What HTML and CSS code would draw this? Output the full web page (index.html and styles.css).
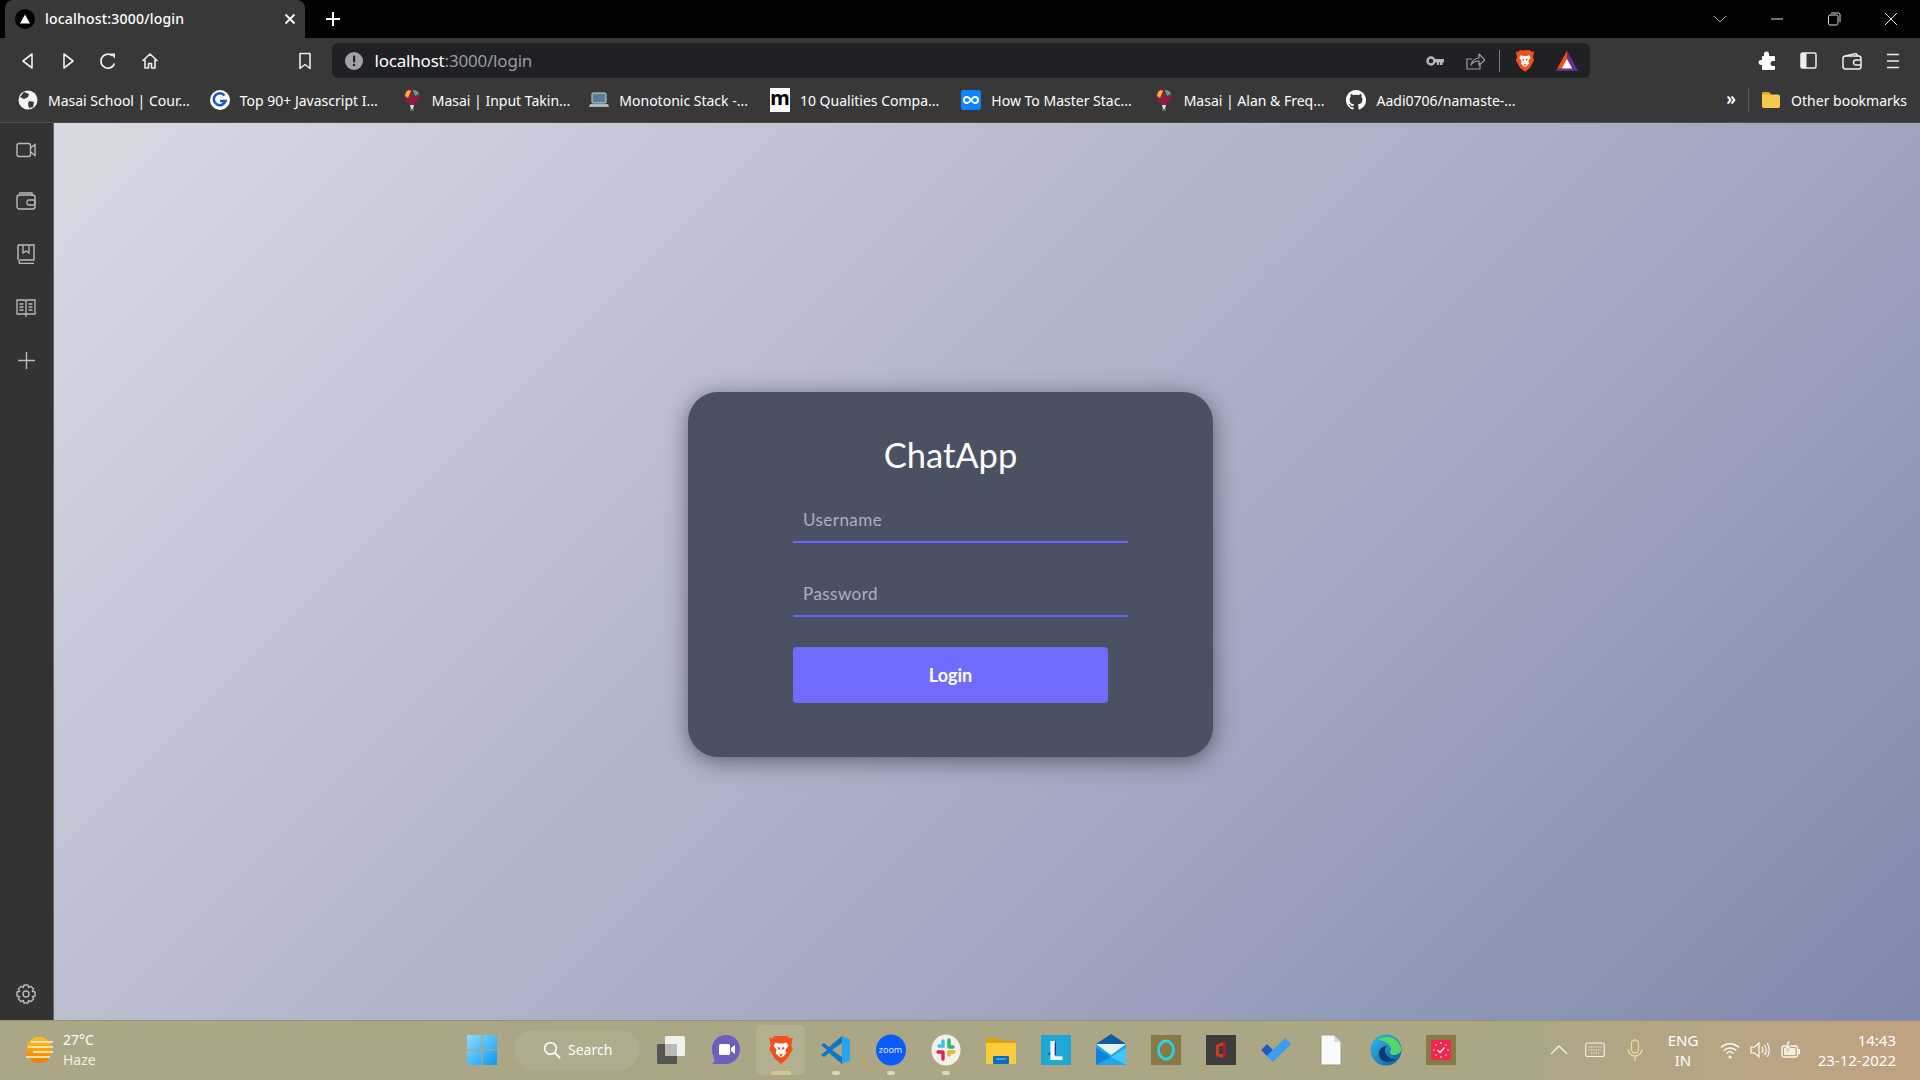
FILE: index.html
```html
<!DOCTYPE html>
<html lang="en">
<head>
  <meta charset="UTF-8" />
  <meta name="viewport" content="width=device-width, initial-scale=1.0"/>
  <title>ChatApp</title>
  <link rel="stylesheet" href="styles.css">
</head>
<body>
  <svg class="defs" width="0" height="0">
    <symbol id="balloon" viewBox="0 0 20 24">
      <path d="M10 1C5 1 2 4 2 8c0 4 4 7 6 9h4c2-2 6-5 6-9 0-4-3-7-8-7z" fill="#8c1d3f"/>
      <path d="M4 4c2-2 4-2 5-1L6 10 3 8z" fill="#e8b931"/>
      <path d="M11 2c3 0 5 1 6 4l-4 2z" fill="#35b0a5"/>
      <path d="M8 17h4l-1 4H9z" fill="#ddd"/>
      <rect x="8" y="21" width="4" height="2" fill="#666"/>
    </symbol>
    <symbol id="lion" viewBox="0 0 24 28">
      <path d="M6 1h12l2 2 3-.5-1.500 7L23 13l-5 9-6 5-6-5-5-9 1.500-3.500L1 2.500 4 3z" fill="#f1511b"/>
      <path d="M7 7l3 1h4l3-1 2 3-3 4 1 3-3 3-2 1-2-1-3-3 1-3-3-4z" fill="#fff"/>
      <path d="M9 11l2 1v2l-2-1zM15 11l-2 1v2l2-1zM10 18h4l-2 2z" fill="#f1511b"/>
    </symbol>
  </svg>

  <header class="tab-strip">
    <div class="tab">
      <span class="tab-favicon">
        <svg width="12" height="12" viewBox="0 0 12 12"><path d="M6 1.500 11 10.500H1z" fill="#fff"/></svg>
      </span>
      <span class="tab-title">localhost:3000/login</span>
      <svg class="tab-close" width="12" height="12" viewBox="0 0 12 12"><path d="M1.500 1.500l9 9M10.500 1.500l-9 9" stroke="#fff" stroke-width="1.800"/></svg>
    </div>
    <svg class="new-tab" width="16" height="16" viewBox="0 0 16 16"><path d="M8 1v14M1 8h14" stroke="#fff" stroke-width="2"/></svg>
    <div class="window-controls">
      <svg width="14" height="14" viewBox="0 0 14 14"><path d="M1 4l6 6 6-6" fill="none" stroke="#aaa"/></svg>
      <svg width="14" height="14" viewBox="0 0 14 14"><path d="M1 7h12" stroke="#ddd"/></svg>
      <svg width="14" height="14" viewBox="0 0 14 14"><rect x="1.500" y="3" width="9.500" height="10" rx="1.500" fill="none" stroke="#ddd"/><path d="M4 1h7.500A1.500 1.500 0 0 1 13 2.500V10" fill="none" stroke="#ddd"/></svg>
      <svg width="14" height="14" viewBox="0 0 14 14"><path d="M1 1l12 12M13 1L1 13" stroke="#ddd"/></svg>
    </div>
  </header>

  <nav class="toolbar">
    <div class="nav-buttons">
      <svg width="16" height="18" viewBox="0 0 16 18"><path d="M12 2v14L3 9z" fill="none" stroke="#eee" stroke-width="1.600" stroke-linejoin="round"/></svg>
      <svg width="16" height="18" viewBox="0 0 16 18"><path d="M4 2v14l9-7z" fill="none" stroke="#eee" stroke-width="1.600" stroke-linejoin="round"/></svg>
      <svg width="18" height="18" viewBox="0 0 18 18"><path d="M15.500 11.500A7 7 0 1 1 13 3.500" fill="none" stroke="#eee" stroke-width="1.800"/><path d="M11 1.500h5v5z" fill="#eee"/></svg>
      <svg width="18" height="18" viewBox="0 0 18 18"><path d="M1.500 9 9 2l7.500 7M4 7.500V16h3.500v-4.500h3V16H14V7.500" fill="none" stroke="#eee" stroke-width="1.600" stroke-linejoin="round"/></svg>
    </div>
    <svg class="bookmark-star" width="14" height="18" viewBox="0 0 14 18"><path d="M2 1.500h10v15L7 12.500l-5 4z" fill="none" stroke="#eee" stroke-width="1.600" stroke-linejoin="round"/></svg>
    <div class="omnibox">
      <svg width="18" height="18" viewBox="0 0 18 18"><circle cx="9" cy="9" r="9" fill="#a0a2a6"/><rect x="8" y="3.500" width="2.200" height="7" rx="1" fill="#202124"/><circle cx="9.100" cy="13" r="1.300" fill="#202124"/></svg>
      <span class="url"><span class="url-host">localhost</span>:3000/login</span>
      <div class="omnibox-actions">
        <svg class="act-key" width="18" height="10" viewBox="0 0 18 10"><circle cx="5" cy="5" r="3.500" fill="none" stroke="#b4b6b9" stroke-width="2.500"/><path d="M8 3h10v3.500h-1.500V9H14V6.500h-1V9h-2V6.500H8z" fill="#b4b6b9"/></svg>
        <svg class="act-share" width="20" height="20" viewBox="0 0 20 20"><path d="M15 12v6H2V8h5" fill="none" stroke="#9b9da0" stroke-width="1.200"/><path d="M6 14c1-5 5-7 8-7V3l6 6-6 5v-4c-3 0-6 1-8 4z" fill="none" stroke="#9b9da0" stroke-width="1.200" stroke-linejoin="round"/></svg>
        <span class="act-divider"></span>
        <svg class="act-brave" width="20" height="24"><use href="#lion"/></svg>
        <svg class="act-bat" width="22" height="22" viewBox="0 0 22 22"><path d="M11 1 22 21H0z" fill="#9e1f63"/><path d="M11 1 22 21H16L11 11z" fill="#662d91"/><path d="M11 1 0 21H6L11 11z" fill="#ff5000"/><path d="M11 9l5.500 10h-11z" fill="#fff"/><path d="M0 21h22l-1.500-2.500h-19z" fill="#662d91"/></svg>
      </div>
    </div>
    <div class="browser-actions">
      <svg width="18" height="20" viewBox="0 0 18 20"><path d="M6 3a2.500 2.500 0 0 1 5 0v2h5a1 1 0 0 1 1 1v4h-2a2.500 2.500 0 0 0 0 5h2v3a1 1 0 0 1-1 1H5a1 1 0 0 1-1-1v-4H3a2.500 2.500 0 0 1 0-5h1V6a1 1 0 0 1 1-1h1z" fill="#fff"/></svg>
      <svg width="17" height="17" viewBox="0 0 17 17"><rect x="1" y="1" width="15" height="15" rx="1.500" fill="none" stroke="#eee" stroke-width="1.500"/><rect x="1" y="1" width="5.500" height="15" fill="#eee"/></svg>
      <svg width="20" height="18" viewBox="0 0 20 18"><path d="M3 4 14 1.500 16 4" fill="none" stroke="#eee" stroke-width="1.400"/><rect x="1" y="4" width="18" height="13" rx="2.500" fill="none" stroke="#eee" stroke-width="1.500"/><path d="M19 8h-5a2.500 2.500 0 0 0 0 5h5" fill="none" stroke="#eee" stroke-width="1.500"/></svg>
      <svg width="14" height="18" viewBox="0 0 14 18"><path d="M1 2.500h12M1 9h12M1 15.500h12" stroke="#eee" stroke-width="1.600"/></svg>
    </div>
  </nav>

  <div class="bookmarks">
    <a class="bookmark">
      <svg width="20" height="20" viewBox="0 0 20 20"><circle cx="10" cy="10" r="9.500" fill="#f2f2f2"/><path d="M6 2l5 2-1 3-4 2-4-2zM11 11l5 1-1 5-4 1-1-4z" fill="#383838"/></svg>
      <span>Masai School | Cour...</span>
    </a>
    <a class="bookmark">
      <svg width="20" height="20" viewBox="0 0 20 20"><circle cx="10" cy="10" r="10" fill="#fff"/><path d="M14.500 5.500A6 6 0 1 0 15.500 11H10" fill="none" stroke="#1a56c4" stroke-width="2.600"/></svg>
      <span>Top 90+ Javascript I...</span>
    </a>
    <a class="bookmark">
      <svg width="20" height="24"><use href="#balloon"/></svg>
      <span>Masai | Input Takin...</span>
    </a>
    <a class="bookmark">
      <svg width="20" height="18" viewBox="0 0 20 18"><rect x="3" y="2" width="14" height="10" rx="1" fill="#5b7a95" stroke="#cfd6dc"/><path d="M1 13h18l1 3H0z" fill="#aeb8c0"/></svg>
      <span>Monotonic Stack -...</span>
    </a>
    <a class="bookmark">
      <span class="favicon-m">m</span>
      <span>10 Qualities Compa...</span>
    </a>
    <a class="bookmark">
      <svg width="20" height="20" viewBox="0 0 20 20"><rect width="20" height="20" rx="3" fill="#0a84ff"/><path d="M10 10c-1.500-2-2.500-3-4-3a3 3 0 0 0 0 6c1.500 0 2.500-1 4-3s2.500-3 4-3a3 3 0 0 1 0 6c-1.500 0-2.500-1-4-3z" fill="none" stroke="#fff" stroke-width="2"/></svg>
      <span>How To Master Stac...</span>
    </a>
    <a class="bookmark">
      <svg width="20" height="24"><use href="#balloon"/></svg>
      <span>Masai | Alan &amp; Freq...</span>
    </a>
    <a class="bookmark">
      <svg width="20" height="20" viewBox="0 0 16 16"><path fill="#fff" d="M8 0C3.580 0 0 3.580 0 8c0 3.540 2.290 6.530 5.470 7.590.4.070.55-.17.55-.38 0-.19-.01-.82-.01-1.490-2.010.37-2.530-.49-2.690-.94-.09-.23-.48-.94-.82-1.130-.28-.15-.68-.52-.01-.53.630-.01 1.080.58 1.230.82.720 1.210 1.870.87 2.330.66.070-.52.280-.87.510-1.070-1.780-.2-3.640-.89-3.640-3.950 0-.87.310-1.590.820-2.150-.08-.2-.36-1.020.08-2.120 0 0 .67-.21 2.200.82.640-.18 1.320-.27 2-.27s1.360.09 2 .27c1.530-1.040 2.200-.82 2.200-.82.440 1.100.16 1.920.08 2.120.51.560.82 1.270.82 2.150 0 3.070-1.870 3.750-3.650 3.950.29.250.54.730.54 1.480 0 1.070-.01 1.930-.01 2.200 0 .21.150.46.550.38A8.010 8.010 0 0 0 16 8c0-4.420-3.580-8-8-8z"/></svg>
      <span>Aadi0706/namaste-...</span>
    </a>
    <div class="bookmarks-end">
      <span class="more">»</span>
      <span class="bm-divider"></span>
      <svg width="20" height="18" viewBox="0 0 20 18"><path d="M1 3a2 2 0 0 1 2-2h5l2 2.500h7a2 2 0 0 1 2 2V15a2 2 0 0 1-2 2H3a2 2 0 0 1-2-2z" fill="#f6c94e"/><path d="M1 3a2 2 0 0 1 2-2h5l2 2.500H1z" fill="#d9a424"/></svg>
      <span>Other bookmarks</span>
    </div>
  </div>

  <div class="browser-body">
    <aside class="sidebar">
      <svg width="20" height="16" viewBox="0 0 20 16"><rect x="1" y="1.500" width="13.500" height="13" rx="2" fill="none" stroke="#b9bbbe" stroke-width="1.400"/><path d="M14.500 6 19 2.500v11L14.500 10" fill="none" stroke="#b9bbbe" stroke-width="1.400"/></svg>
      <svg width="20" height="18" viewBox="0 0 20 18"><path d="M3 1h13v3" fill="none" stroke="#b9bbbe" stroke-width="1.300"/><rect x="1" y="3" width="18" height="14" rx="2.500" fill="none" stroke="#b9bbbe" stroke-width="1.400"/><rect x="11" y="8" width="8" height="5" rx="1.500" fill="none" stroke="#b9bbbe" stroke-width="1.300"/></svg>
      <svg width="18" height="20" viewBox="0 0 18 20"><path d="M1 16V2a1 1 0 0 1 1-1h15v15H3a2 2 0 0 0 0 3.500h14" fill="none" stroke="#b9bbbe" stroke-width="1.400"/><path d="M6 1v8l3-2 3 2V1" fill="none" stroke="#b9bbbe" stroke-width="1.300"/></svg>
      <svg width="20" height="20" viewBox="0 0 20 20"><path d="M1 2h8l1 1 1-1h8v14h-8l-1 1-1-1H1zM10 3v16" fill="none" stroke="#b9bbbe" stroke-width="1.300"/><path d="M3.500 6h4M3.500 9h4M3.500 12h4M12.500 6h4M12.500 9h4M12.500 12h4" stroke="#b9bbbe" stroke-width="1.300"/></svg>
      <svg width="17" height="17" viewBox="0 0 17 17"><path d="M8.500 0v17M0 8.500h17" stroke="#b9bbbe" stroke-width="1.400"/></svg>
      <svg class="sidebar-gear" width="20" height="20" viewBox="0 0 20 20"><circle cx="10" cy="10" r="3" fill="none" stroke="#b9bbbe" stroke-width="1.400"/><path d="M8 1h4l.6 2.500 2.200-1.200 2.800 2.800-1.300 2.200L19 8v4l-2.700.7 1.300 2.200-2.800 2.800-2.200-1.300L12 19H8l-.6-2.600-2.200 1.300-2.800-2.800 1.300-2.200L1 12V8l2.700-.7-1.300-2.200 2.800-2.800 2.200 1.200z" fill="none" stroke="#b9bbbe" stroke-width="1.400" stroke-linejoin="round"/></svg>
    </aside>

    <main class="page">
      <form class="login-card">
        <h1 class="login-title">ChatApp</h1>
        <input class="login-input" type="text" placeholder="Username">
        <input class="login-input" type="password" placeholder="Password">
        <button class="login-button" type="button">Login</button>
      </form>
    </main>
  </div>

  <footer class="taskbar">
    <div class="weather">
      <svg width="30" height="30" viewBox="0 0 30 30"><defs><linearGradient id="sun" x1="0" y1="0" x2="0" y2="1"><stop offset="0" stop-color="#ffc21a"/><stop offset="1" stop-color="#ef7d00"/></linearGradient></defs><circle cx="15" cy="15" r="13" fill="url(#sun)"/><path d="M7 7h22M4 12h25M9 17h20M2 22h24" stroke="#f0e6c4" stroke-width="2.200" opacity=".9"/></svg>
      <div class="weather-text"><span>27°C</span><span>Haze</span></div>
    </div>

    <div class="task-center">
      <svg class="start-logo" width="30" height="30" viewBox="0 0 30 30"><defs><linearGradient id="win" x1="0" y1="0" x2="1" y2="1"><stop offset="0" stop-color="#8bdcff"/><stop offset="1" stop-color="#0a9bf5"/></linearGradient></defs><path d="M0 0h14.300v14.300H0zM15.700 0H30v14.300H15.700zM0 15.700h14.300V30H0zM15.700 15.700H30V30H15.700z" fill="url(#win)"/></svg>
      <div class="task-search">
        <svg width="18" height="18" viewBox="0 0 18 18"><circle cx="7.500" cy="7.500" r="5.800" fill="none" stroke="#fff" stroke-width="1.600"/><path d="M11.800 11.800 17 17" stroke="#fff" stroke-width="1.800"/></svg>
        <span>Search</span>
      </div>
      <div class="task-icons">
        <span class="task-icon">
          <svg width="30" height="30" viewBox="0 0 30 30"><rect x="9" y="1" width="20" height="20" rx="1.500" fill="#f0f0ee"/><rect x="1" y="9" width="20" height="20" rx="1.500" fill="#505050" opacity=".95"/><rect x="9" y="9" width="12" height="12" fill="#b9b9b5"/></svg>
        </span>
        <span class="task-icon">
          <svg width="30" height="32" viewBox="0 0 30 32"><path d="M15 1c8 0 14 6 14 14s-6 15-14 15H1c2-1 3-3 2-6-1-2-2-5-2-9C1 7 7 1 15 1z" fill="#6c5fc1"/><rect x="8" y="10" width="11" height="11" rx="1.500" fill="#fff"/><path d="M20 14l4-3v9l-4-3z" fill="#fff"/></svg>
        </span>
        <span class="task-icon is-active">
          <svg width="26" height="30"><use href="#lion"/></svg>
          <i class="task-dot dot-active"></i>
        </span>
        <span class="task-icon">
          <svg width="30" height="30" viewBox="0 0 30 30"><path d="M21 1l8 3.500v21L21 29z" fill="#2aa4ec"/><path d="M21 1v7l-10 7 10 7v7L8 18l-5 4-3-2 6-5-6-5 3-2 5 4z" fill="#0a78c2"/></svg>
          <i class="task-dot"></i>
        </span>
        <span class="task-icon">
          <svg width="30" height="32" viewBox="0 0 30 32"><ellipse cx="15" cy="16" rx="15" ry="15.500" fill="#0b5cff"/></svg>
          <span class="zoom-label">zoom</span>
          <i class="task-dot"></i>
        </span>
        <span class="task-icon">
          <svg width="30" height="32" viewBox="0 0 30 32"><ellipse cx="15" cy="16" rx="14.500" ry="15.500" fill="#f2f1ea"/><path d="M12 7v5H8" fill="none" stroke="#36c5f0" stroke-width="3.400" stroke-linecap="round"/><path d="M18 6v6" stroke="#2eb67d" stroke-width="3.400" stroke-linecap="round"/><path d="M22 13h-4" stroke="#2eb67d" stroke-width="3.400" stroke-linecap="round"/><path d="M18 21v-3h5" fill="none" stroke="#ecb22e" stroke-width="3.400" stroke-linecap="round"/><path d="M12 18v7M7 18h5" fill="none" stroke="#e01e5a" stroke-width="3.400" stroke-linecap="round"/></svg>
          <i class="task-dot"></i>
        </span>
        <span class="task-icon">
          <svg width="30" height="30" viewBox="0 0 30 30"><path d="M0 3h11l3 3h16v22H0z" fill="#e0a400"/><path d="M0 8h30v20a1 1 0 0 1-1 1H1a1 1 0 0 1-1-1z" fill="#fbcd3c"/><rect x="7" y="21" width="16" height="8" rx="1" fill="#0f6cbd"/><rect x="10" y="23" width="10" height="2" fill="#39a5e8"/></svg>
        </span>
        <span class="task-icon">
          <svg width="30" height="30" viewBox="0 0 30 30"><rect width="30" height="30" fill="#1fa8d6"/><path d="M15 6h0v14h-8z" fill="#0b3f8f"/></svg>
          <span class="tile-letter">L</span>
        </span>
        <span class="task-icon">
          <svg width="30" height="32" viewBox="0 0 30 32"><path d="M15 0 30 10H0z" fill="#0a5ea8"/><rect y="10" width="30" height="21" fill="#1ea7ea"/><path d="M0 10h30L15 21z" fill="#e9f1f8"/><path d="M0 31V14l15 9z" fill="#0f84d6"/><path d="M30 31V14l-15 9z" fill="#42c6f5"/></svg>
        </span>
        <span class="task-icon">
          <svg width="30" height="30" viewBox="0 0 30 30"><rect width="30" height="30" fill="#877a47"/><ellipse cx="15" cy="15" rx="7.500" ry="9" fill="none" stroke="#2fd0ea" stroke-width="2.800"/></svg>
        </span>
        <span class="task-icon">
          <svg width="30" height="30" viewBox="0 0 30 30"><rect width="30" height="30" fill="#3d3d3b"/><path d="M10 10l7-3v16l-7-2z" fill="#d13b1f"/><rect x="13" y="11" width="4" height="8" fill="#3d3d3b"/><path d="M17 7h3v15h-3z" fill="#a91d2c"/></svg>
        </span>
        <span class="task-icon">
          <svg width="30" height="24" viewBox="0 0 30 24"><path d="M0 12l6-6 6 6-6 6z" fill="#1b5fc0"/><path d="M6 18 24 0l6 6-18 18z" fill="#3c9bf0"/></svg>
        </span>
        <span class="task-icon">
          <svg width="22" height="32" viewBox="0 0 22 32"><path d="M1 1h13l7 7v23H1z" fill="#fafafa" stroke="#9d9a86"/><path d="M14 1v7h7z" fill="#d8d8d8"/></svg>
        </span>
        <span class="task-icon">
          <svg width="32" height="32" viewBox="0 0 32 32"><defs><linearGradient id="edge" x1="0" y1="0" x2="1" y2="1"><stop offset="0" stop-color="#2ec0e4"/><stop offset="1" stop-color="#0c59a4"/></linearGradient></defs><circle cx="16" cy="16" r="15.500" fill="url(#edge)"/><path d="M8 6C14 0 28 2 31 14c1 7-7 8-10 6-2-1-1-3 0-4 1-5-8-11-13-10z" fill="#56d66a"/><path d="M26 25c-5 4-15 5-17-4-1-5 3-9 8-9-2 2-3 5-1 8 2 4 7 6 10 5z" fill="#0a3a78"/></svg>
        </span>
        <span class="task-icon">
          <svg width="30" height="30" viewBox="0 0 30 30"><rect width="30" height="30" fill="#877a47"/><rect x="5" y="5" width="20" height="20" rx="2" fill="#f5264d"/><path d="M15 7v2M15 21v2M7 15h2M21 15h2M9.500 9.500l1 1M19.500 19.500l1 1M20.500 9.500l-1 1M10.500 19.500l-1 1" stroke="#fde" stroke-width="1.200"/><path d="M11.500 15l2.500 2.500 4.500-5" fill="none" stroke="#fff" stroke-width="1.400"/></svg>
        </span>
      </div>
    </div>

    <div class="tray">
      <svg class="tray-chevron" width="18" height="10" viewBox="0 0 18 10"><path d="M1 9l8-8 8 8" fill="none" stroke="#f5f3e6" stroke-width="1.300"/></svg>
      <svg class="tray-keyboard" width="20" height="16" viewBox="0 0 20 16"><rect x=".7" y="1" width="18.600" height="13.500" rx="2" fill="none" stroke="#f5f3e6" stroke-width="1.100"/><path d="M3.500 5h13M3.500 8h13M6 11h8" stroke="#f5f3e6" stroke-dasharray="1.200 1.200"/></svg>
      <svg class="tray-mic" width="16" height="22" viewBox="0 0 16 22"><rect x="4.500" y="1" width="7" height="13" rx="3.500" fill="none" stroke="#e0dda0" stroke-width="1.300"/><path d="M1 10a7 7 0 0 0 14 0M8 17v5" fill="none" stroke="#e0dda0" stroke-width="1.300"/></svg>
      <div class="tray-lang"><span>ENG</span><span>IN</span></div>
      <svg class="tray-wifi" width="20" height="18" viewBox="0 0 20 18"><path d="M1 6.500c5-5 13-5 18 0M3.800 9.500c3.500-3.500 9-3.500 12.500 0M6.600 12.500c2-2 4.800-2 6.800 0" fill="none" stroke="#fafafa" stroke-width="1.500"/><circle cx="10" cy="16" r="1.500" fill="#fafafa"/></svg>
      <svg class="tray-volume" width="20" height="20" viewBox="0 0 20 20"><path d="M1 7h3.500L9 3v14l-4.500-4H1z" fill="none" stroke="#fafafa" stroke-width="1.200"/><path d="M12 7c1.300 2 1.300 4 0 6M14.500 5c2.200 3 2.200 7 0 10M17 3c3 4 3 10 0 14" fill="none" stroke="#fafafa" stroke-width="1.200"/></svg>
      <svg class="tray-battery" width="20" height="18" viewBox="0 0 20 18"><rect x="1" y="5" width="15.500" height="11" rx="2" fill="none" stroke="#fafafa" stroke-width="1.300"/><rect x="3" y="7" width="11.500" height="7" fill="#f2efd8"/><rect x="17" y="8" width="2" height="5" fill="#fafafa"/><path d="M7 0 4 7h3l-1 4 4-6H7l2-5z" fill="#fafafa" stroke="#aaa583" stroke-width=".5"/></svg>
      <div class="tray-clock"><span>14:43</span><span>23-12-2022</span></div>
    </div>
  </footer>
</body>
</html>
```

FILE: styles.css
```css
* {
  box-sizing: border-box;
}
html, body {
  margin: 0;
  height: 100%;
}
body {
  width: 1920px;
  height: 1080px;
  overflow: hidden;
  display: flex;
  flex-direction: column;
  font-family: "Noto Sans", "Open Sans", sans-serif;
  color: #fff;
  background: #383838;
}
svg {
  flex: none;
  display: block;
}
.defs {
  position: absolute;
}

/* tab strip */
.tab-strip {
  height: 38px;
  flex: none;
  background: #000;
  display: flex;
  align-items: flex-end;
  padding-left: 5px;
}
.tab {
  width: 300px;
  height: 38px;
  background: #383838;
  border-radius: 8px 8px 0 0;
  display: flex;
  align-items: center;
  padding: 0 9px 0 10px;
}
.tab-favicon {
  width: 20px;
  height: 20px;
  border-radius: 50%;
  background: #000;
  display: flex;
  align-items: center;
  justify-content: center;
}
.tab-title {
  margin: 0 0 2px 10px;
  font-size: 14px;
  font-weight: 500;
  letter-spacing: 0.2px;
  flex: 1;
}
.new-tab {
  margin: 0 0 11px 20px;
}
.window-controls {
  margin-left: auto;
  height: 38px;
  width: 185px;
  margin-right: 22px;
  display: flex;
  align-items: center;
  justify-content: space-between;
}

/* toolbar */
.toolbar {
  height: 40px;
  flex: none;
  display: flex;
  align-items: flex-end;
  padding-left: 20px;
}
.toolbar > svg, .nav-buttons, .browser-actions {
  align-self: center;
  margin-top: 5px;
}
.nav-buttons {
  display: flex;
  align-items: center;
  gap: 23.5px;
}
.bookmark-star {
  margin-left: 139px;
}
.omnibox {
  width: 1258px;
  height: 35px;
  margin-left: 20px;
  background: #202124;
  border-radius: 6px;
  display: flex;
  align-items: center;
  padding-left: 13px;
}
.url {
  margin-left: 12px;
  font-size: 17px;
  color: #9a9b9e;
  letter-spacing: -0.2px;
}
.url-host {
  color: #fff;
}
.omnibox-actions {
  margin-left: auto;
  display: flex;
  align-items: center;
  padding-right: 12px;
}
.act-share {
  margin-left: 21px;
}
.act-divider {
  width: 1px;
  height: 22px;
  background: #77797c;
  margin-left: 14px;
}
.act-brave {
  margin-left: 15px;
}
.act-bat {
  margin-left: 21px;
}
.browser-actions {
  display: flex;
  align-items: center;
  margin-left: 168px;
  gap: 24.5px;
}

/* bookmarks bar */
.bookmarks {
  height: 45px;
  flex: none;
  display: flex;
  align-items: center;
  font-size: 14px;
  padding: 0 13px 0 18px;
  border-bottom: 1px solid #4c4c4c;
}
.bookmark {
  display: flex;
  align-items: center;
  gap: 10px;
  margin-right: 22px;
  white-space: nowrap;
}
.bookmark:nth-child(1) {
  margin-right: 20px;
}
.bookmark:nth-child(2) {
  margin-right: 24px;
}
.bookmark:nth-child(3) {
  margin-right: 19px;
}
.favicon-m {
  width: 20px;
  height: 24px;
  background: #fff;
  color: #000;
  font-size: 20px;
  font-weight: 700;
  line-height: 20px;
  text-align: center;
}
.bookmarks-end {
  margin-left: auto;
  display: flex;
  align-items: center;
  gap: 10px;
}
.more {
  font-size: 17px;
  font-weight: 600;
  line-height: 1;
  margin-bottom: 3px;
}
.bm-divider {
  width: 1px;
  height: 24px;
  background: #5a5a5a;
  margin: 0 2px;
}

/* browser body */
.browser-body {
  flex: 1;
  display: flex;
  min-height: 0;
}
.sidebar {
  width: 54px;
  flex: none;
  border-right: 1px solid #666;
  background: #333;
  display: flex;
  flex-direction: column;
  align-items: center;
  padding: 19px 1px 16px 0;
  gap: 34px;
}
.sidebar-gear {
  margin-top: auto;
}
.page {
  flex: 1;
  display: flex;
  align-items: center;
  justify-content: center;
  padding: 6px 73px 0 0;
  background: linear-gradient(135deg, #d8dae3 0%, #b4b8cb 40%, #a3a8c2 62%, #7f88ac 100%);
}

/* login card */
.login-card {
  width: 525px;
  height: 365px;
  background: #4a5163;
  border-radius: 30px;
  box-shadow: 0 4px 22px rgba(0, 0, 0, 0.45);
  padding: 41px 70px 0 105px;
  display: flex;
  flex-direction: column;
  align-items: flex-start;
  font-family: Lato, "Noto Sans", sans-serif;
}
.login-title {
  margin: 0 0 0 -35px;
  width: 385px;
  text-align: center;
  font-size: 34.500px;
  font-weight: 400;
  line-height: 44px;
}
.login-input {
  width: 335px;
  height: 49px;
  margin: 17px 0 0;
  padding: 4px 10px 0;
  border: 0;
  border-bottom: 2px solid #6c63ff;
  background: transparent;
  font: inherit;
  font-size: 17px;
  letter-spacing: 0.45px;
  color: #fff;
  outline: none;
}
.login-input + .login-input {
  margin-top: 24px;
  height: 50px;
}
.login-input::placeholder {
  color: #adb2bc;
  opacity: 1;
}
.login-button {
  width: 315px;
  height: 56px;
  margin-top: 30px;
  border: 0;
  border-radius: 4px;
  background: #706cff;
  color: #fff;
  font: inherit;
  font-size: 18px;
  font-weight: 700;
}

/* taskbar */
.taskbar {
  height: 60px;
  flex: none;
  display: flex;
  align-items: center;
  padding-bottom: 2px;
  border-top: 1px solid #94917c;
  background: linear-gradient(90deg, #aba786 0%, #aba785 80%, #b9a583 93%, #c0a182 100%);
}
.weather {
  width: 467px;
  display: flex;
  align-items: center;
  padding-left: 24px;
  gap: 9px;
}
.weather-text {
  display: flex;
  flex-direction: column;
  font-size: 14px;
  line-height: 20px;
}
.weather-text span + span {
  color: #f3f1e4;
}
.task-center {
  display: flex;
  align-items: center;
}
.task-search {
  width: 125px;
  height: 40px;
  margin-left: 17px;
  border-radius: 20px;
  background: #b0ac8f;
  display: flex;
  align-items: center;
  gap: 7px;
  padding-left: 29px;
  font-size: 14px;
}
.task-icons {
  display: flex;
  margin-left: 4px;
}
.task-icon {
  position: relative;
  width: 55px;
  height: 50px;
  display: flex;
  align-items: center;
  justify-content: center;
}
.is-active::before {
  content: "";
  position: absolute;
  left: 3px;
  right: 3px;
  top: 0;
  bottom: 0;
  background: rgba(255, 255, 255, 0.1);
  border-radius: 5px;
}
.is-active svg {
  position: relative;
}
.task-dot {
  position: absolute;
  left: 50%;
  bottom: 0;
  width: 8px;
  height: 4px;
  margin-left: -4px;
  border-radius: 2px;
  background: #d8d6c4;
}
.dot-active {
  width: 20px;
  margin-left: -10px;
  background: #d3c98c;
}
.zoom-label {
  position: absolute;
  left: 0;
  right: 0;
  text-align: center;
  font-size: 9px;
  color: #dfe9ff;
}
.tile-letter {
  position: absolute;
  left: 0;
  right: 0;
  text-align: center;
  font-size: 27px;
  font-weight: 700;
  color: #fff;
}
.tray {
  margin-left: auto;
  display: flex;
  align-items: center;
  padding-right: 24px;
}
.tray-keyboard {
  margin-left: 17px;
}
.tray-mic {
  margin-left: 22px;
}
.tray-lang {
  width: 40px;
  margin-left: 20px;
  display: flex;
  flex-direction: column;
  align-items: center;
  font-size: 15px;
  line-height: 20px;
}
.tray-wifi {
  margin-left: 17px;
}
.tray-volume {
  margin-left: 10px;
}
.tray-battery {
  margin-left: 11px;
}
.tray-clock {
  width: 90px;
  margin-left: 5px;
  display: flex;
  flex-direction: column;
  align-items: flex-end;
  font-size: 15px;
  line-height: 20px;
}
```
